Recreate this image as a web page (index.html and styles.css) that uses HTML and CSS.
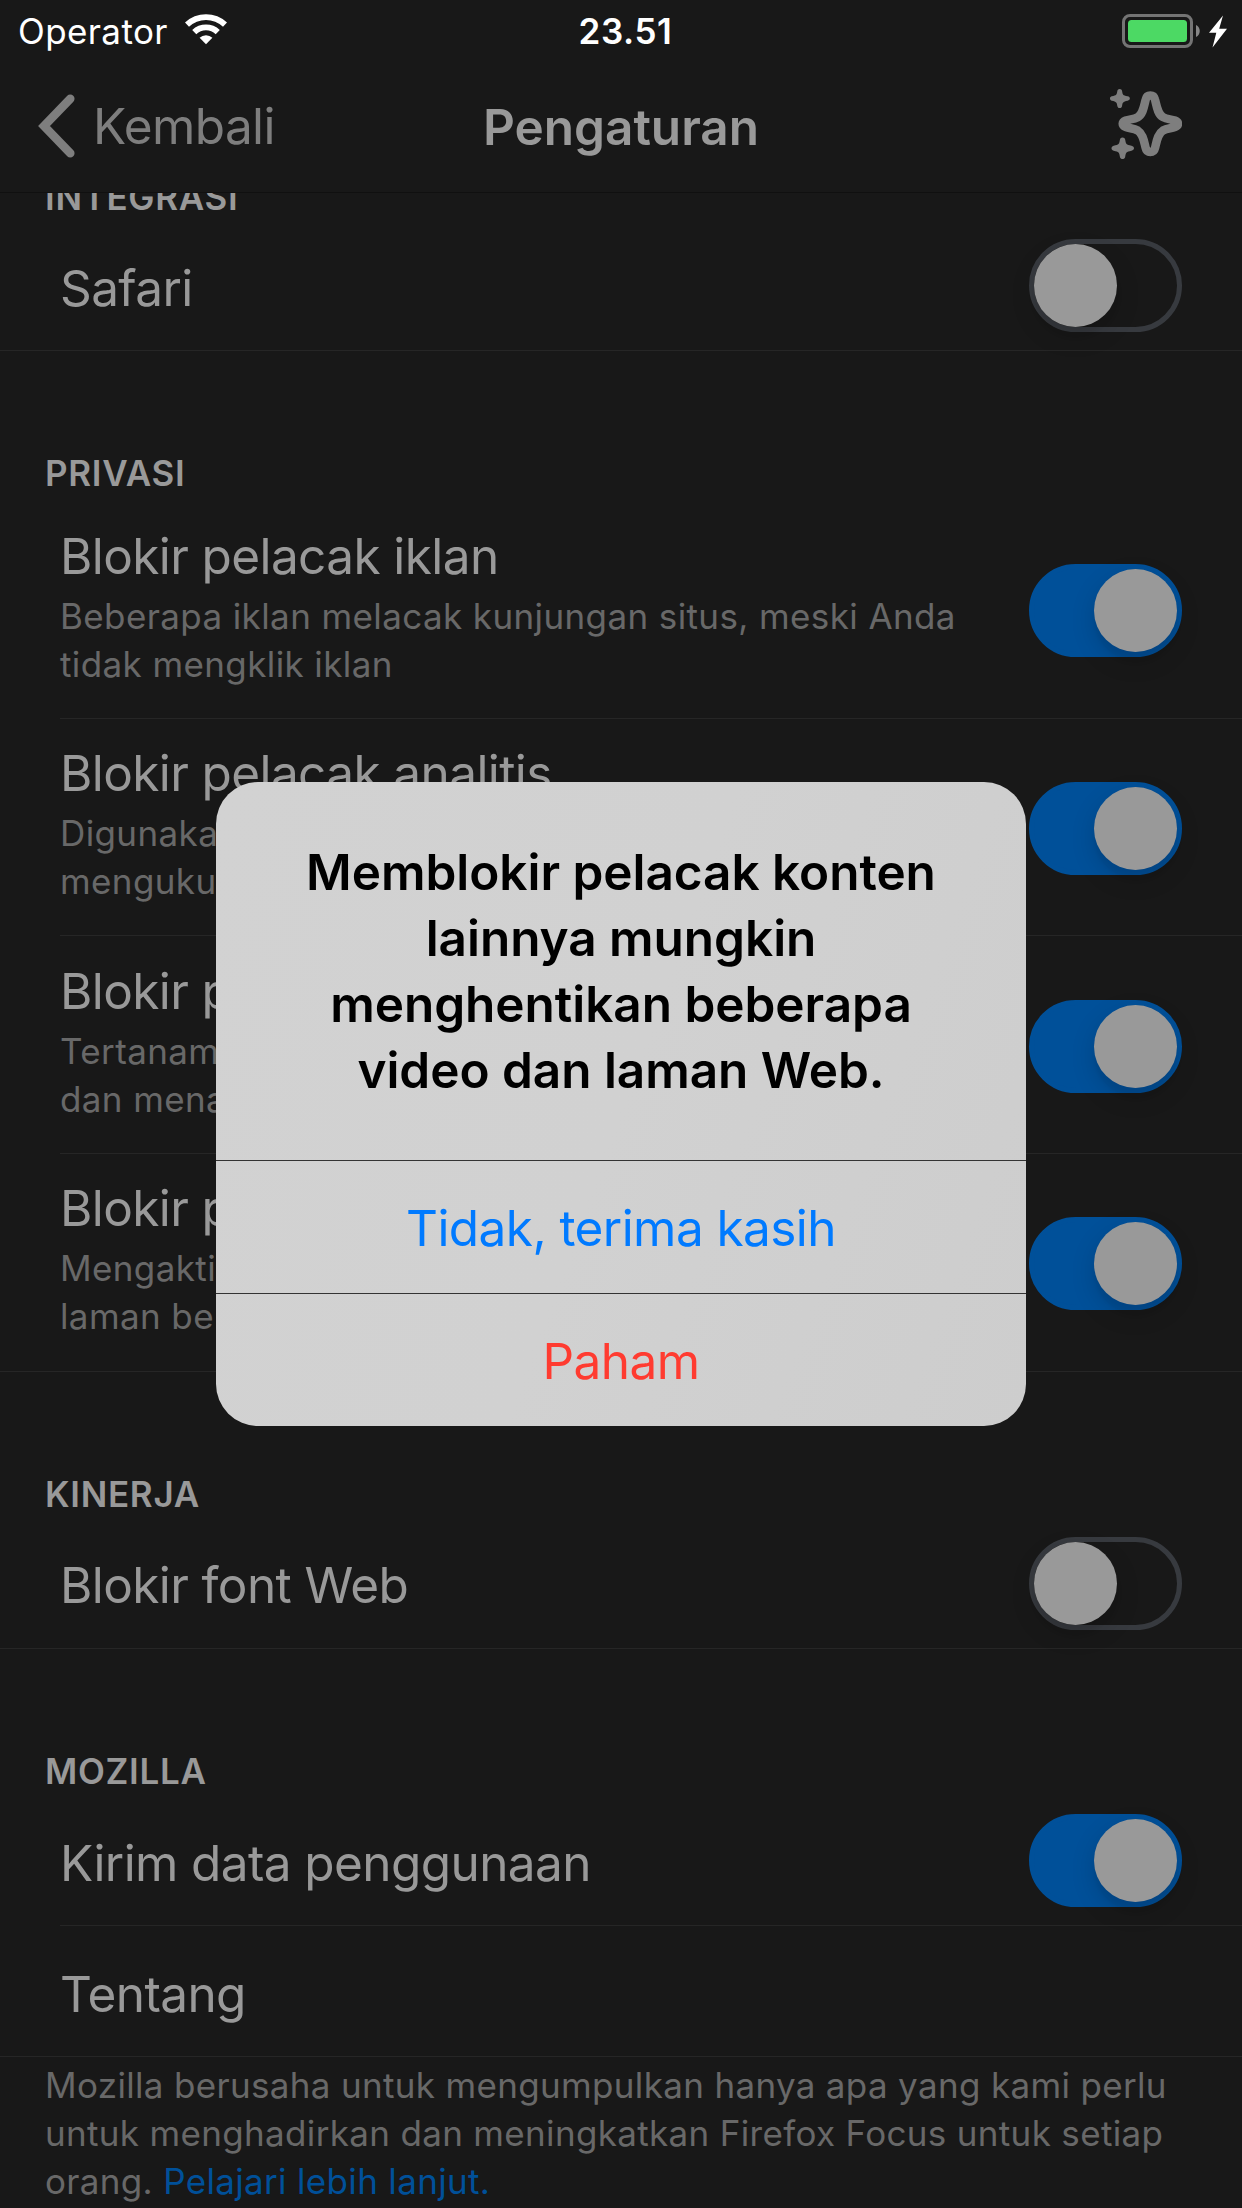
FILE: index.html
```html
<!DOCTYPE html>
<html lang="id">
<head>
<meta charset="utf-8">
<title>Pengaturan</title>
<link rel="stylesheet" href="styles.css">
</head>
<body>
<div class="screen">
  <header class="top">
    <div class="status">
      <div class="carrier"><span class="carrier-name">Operator</span>
        <svg class="wifi" width="42" height="31" viewBox="0 0 42 31" fill="#fff"><path d="M0 8.6a30.3 30.3 0 0 1 42 0l-4 4.2a24.6 24.6 0 0 0-34 0z"/><path d="M7.2 16a19.8 19.8 0 0 1 27.6 0l-4.1 4.2a14 14 0 0 0-19.4 0z"/><path d="M14.6 23.7a9.4 9.4 0 0 1 12.800 0L21 30.200z"/></svg>
      </div>
      <span class="clock">23.51</span>
      <div class="power">
        <svg width="106" height="34" viewBox="0 0 106 34"><rect x="1.5" y="1.5" width="68" height="31" rx="6.5" fill="none" stroke="#747474" stroke-width="3"/><rect x="6" y="6" width="59" height="22" rx="3.5" fill="#4cd964"/><path d="M74 11c5 2 5 10 0 12z" fill="#868686"/><path d="M101 1.500L87 18.700h7.300L90.500 33.500 105 14.800h-7.800z" fill="#fff"/></svg>
      </div>
    </div>
    <nav class="nav">
      <div class="back">
        <svg width="37" height="64" viewBox="0 0 37 64" fill="none" stroke="#7e7e7e" stroke-width="8.500" stroke-linecap="round" stroke-linejoin="miter"><path d="M32.300 4.800L6 32l26.300 27.200"/></svg>
        <span class="back-label">Kembali</span>
      </div>
      <h1 class="title">Pengaturan</h1>
      <svg class="sparkle" width="72" height="72" viewBox="0 0 72 72"><path d="M40.300 7.500C43 7.500 44.500 9.300 45 11.500C46.700 18 47.500 26 53 29.200C57 31.500 61 31 65 32.500C69 34 69 37.500 65 39C61 40.500 57 40.200 53 42.500C47.500 46 46.700 53.500 45 60C44.500 62.200 43 64 40.300 64C37.700 64 36.200 62.200 35.700 60C34 53.500 33.200 46 27.700 42.500C23.700 40.200 19.700 40.500 15.700 39C11.700 37.500 11.700 34 15.700 32.500C19.700 31 23.700 31.500 27.700 29.200C33.200 26 34 18 35.700 11.500C36.200 9.300 37.700 7.500 40.300 7.500Z" fill="none" stroke="#7e7e7e" stroke-width="8.500" stroke-linejoin="round"/><g fill="#7e7e7e"><path d="M9.700 1c1.400 0 2 .7 2.300 1.800.7 4 .8 4.500 5.600 5.500 3 .6 3 3.800 0 4.400-4.800 1-4.900 1.500-5.600 5.500-.5 2.500-4.100 2.500-4.600 0-.7-4-.8-4.500-5.600-5.500-2.500-.6-2.500-3.800 0-4.400 4.800-1 4.900-1.500 5.600-5.500C7.700 1.700 8.300 1 9.700 1z"/><path transform="translate(1.600 48.400) scale(1.130)" d="M9.700 1c1.400 0 2 .7 2.300 1.800.7 4 .8 4.500 5.600 5.500 3 .6 3 3.800 0 4.400-4.800 1-4.900 1.500-5.600 5.500-.5 2.500-4.100 2.500-4.600 0-.7-4-.8-4.500-5.600-5.500-2.500-.6-2.500-3.800 0-4.400 4.800-1 4.900-1.500 5.600-5.500C7.700 1.700 8.300 1 9.700 1z"/></g></svg>
    </nav>
  </header>
  <main class="settings">
    <section>
      <h2 class="heading heading-first">INTEGRASI</h2>
      <div class="row"><span class="label">Safari</span><span class="switch"></span></div>
    </section>
    <section>
      <h2 class="heading heading-privacy">PRIVASI</h2>
      <div class="row tall inset"><div class="copy"><span class="label">Blokir pelacak iklan</span><p class="detail">Beberapa iklan melacak kunjungan situs, meski Anda<br>tidak mengklik iklan</p></div><span class="switch on"></span></div>
      <div class="row tall inset"><div class="copy"><span class="label">Blokir pelacak analitis</span><p class="detail">Digunakan<br>mengukur</p></div><span class="switch on"></span></div>
      <div class="row tall inset"><div class="copy"><span class="label">Blokir p</span><p class="detail">Tertanam<br>dan mena</p></div><span class="switch on"></span></div>
      <div class="row tall"><div class="copy"><span class="label">Blokir p</span><p class="detail">Mengakti<br>laman be</p></div><span class="switch on"></span></div>
    </section>
    <section>
      <h2 class="heading heading-speed">KINERJA</h2>
      <div class="row"><span class="label">Blokir font Web</span><span class="switch"></span></div>
    </section>
    <section>
      <h2 class="heading heading-mozilla">MOZILLA</h2>
      <div class="row inset"><span class="label">Kirim data penggunaan</span><span class="switch on"></span></div>
      <div class="row row-about"><span class="label">Tentang</span></div>
      <p class="footnote">Mozilla berusaha untuk mengumpulkan hanya apa yang kami perlu<br>untuk menghadirkan dan meningkatkan Firefox Focus untuk setiap<br>orang. <a class="link">Pelajari lebih lanjut.</a></p>
    </section>
  </main>
  <div class="alert" role="dialog">
    <p class="message">Memblokir pelacak konten<br>lainnya mungkin<br>menghentikan beberapa<br>video dan laman Web.</p>
    <div class="action">Tidak, terima kasih</div>
    <div class="action destructive">Paham</div>
  </div>
</div>
</body>
</html>
```
FILE: styles.css
```css
* { box-sizing: border-box; margin: 0; padding: 0; }
body { background: #181818; font-family: Inter, "Liberation Sans", sans-serif; color: #999; }
.screen { position: relative; width: 1242px; height: 2208px; overflow: hidden; background: #181818; }
.top { height: 193px; border-bottom: 1px solid #101010; }
.status { height: 60px; display: grid; grid-template-columns: 1fr auto 1fr; align-items: center; padding: 2px 14px 0 18px; color: #fff; font-size: 35px; }
.carrier { display: flex; align-items: center; gap: 17px; letter-spacing: 0.4px; }
.wifi { margin-top: -3px; }
.clock { font-weight: 600; letter-spacing: 0.6px; margin-left: 5px; }
.power { display: flex; justify-content: flex-end; margin-top: -1px; }
.nav { height: 132px; display: grid; grid-template-columns: 1fr auto 1fr; align-items: center; padding: 0 38px; font-size: 49.5px; }
.back { display: flex; align-items: center; gap: 18px; color: #7e7e7e; letter-spacing: -0.6px; }
.title { font-size: 49.5px; font-weight: 600; margin-top: 2px; }
.sparkle { justify-self: end; margin: -4px 22px 0 0; }
.heading { padding-left: 45px; font-size: 35px; line-height: 44px; font-weight: 600; letter-spacing: 0.7px; }
.heading-first { height: 26px; overflow: hidden; display: flex; align-items: flex-end; }
.heading-privacy { height: 150px; padding-top: 100px; }
.heading-speed { height: 145px; padding-top: 100px; }
.heading-mozilla { height: 145px; padding-top: 100px; }
.row { position: relative; height: 132px; padding: 2px 60px 0; display: flex; align-items: center; justify-content: space-between; border-bottom: 1px solid #262626; }
.row-about { height: 131px; }
.inset { border-bottom: 0; }
.inset::after { content: ""; position: absolute; left: 60px; right: 0; bottom: 0; height: 1px; background: #262626; }
.label { display: block; padding-top: 4px; font-size: 49.5px; line-height: 60px; letter-spacing: -0.6px; }
.tall { height: 217.67px; }
.tall .label { padding: 0 0 6px; }
.copy { padding-bottom: 8px; }
.detail { font-size: 35px; line-height: 48px; color: #686868; letter-spacing: 0.39px; white-space: nowrap; }
.switch { width: 153px; height: 93px; border-radius: 47px; border: 5px solid #373a3f; display: flex; align-items: center; }
.switch::before { content: ""; width: 83px; height: 83px; border-radius: 50%; background: #999; box-shadow: 0 9px 24px rgba(0,0,0,.15), 0 9px 3px rgba(0,0,0,.04); }
.switch.on { background: #005099; border-color: #005099; justify-content: flex-end; }
.footnote { padding: 4px 0 0 45px; font-size: 35px; line-height: 48px; letter-spacing: 0.33px; color: #686868; white-space: nowrap; }
.link { color: #005099; }
.alert { position: absolute; left: 216px; top: 782px; width: 810px; height: 644px; border-radius: 42px; overflow: hidden; background: linear-gradient(110deg, #d2d2d2 0%, #d1d1d1 50%, #cdcdcd 100%); color: #000; text-align: center; }
.message { height: 378px; padding-top: 57px; font-size: 49.5px; line-height: 66px; font-weight: 600; letter-spacing: -0.04px; }
.action { height: 133px; padding-top: 1px; border-top: 1px solid #333; display: flex; align-items: center; justify-content: center; font-size: 49.5px; letter-spacing: -0.57px; color: #007aff; }
.destructive { color: #ff3b30; }
```
